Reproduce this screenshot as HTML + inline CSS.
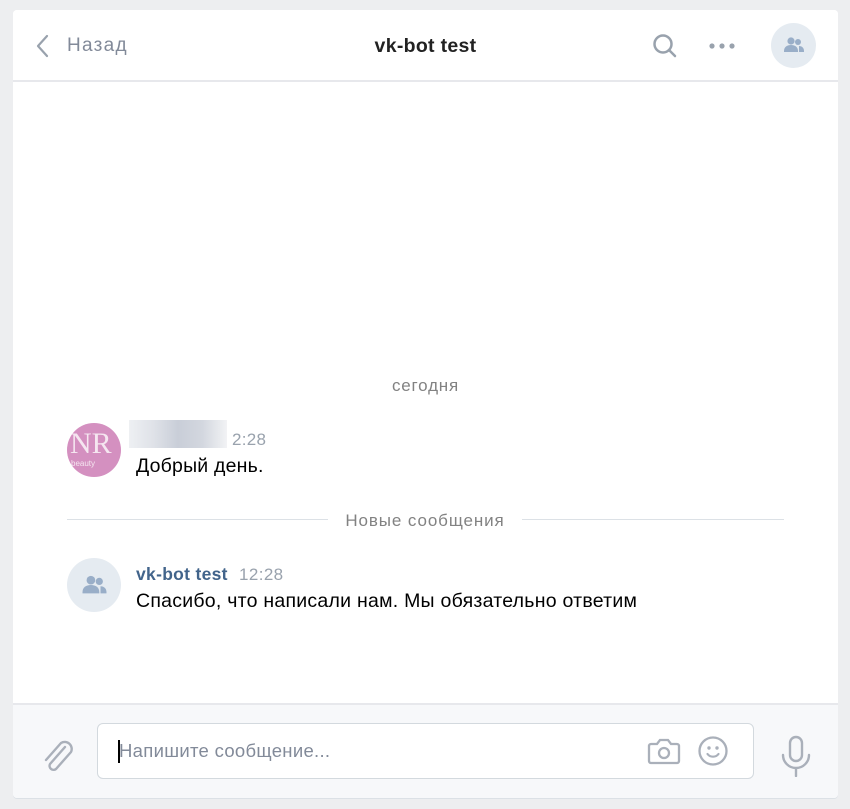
<!DOCTYPE html>
<html><head><meta charset="utf-8"><style>
*{margin:0;padding:0;box-sizing:border-box}
body{width:850px;height:809px;background:#edeef0;font-family:"Liberation Sans",Arial,sans-serif;position:relative;overflow:hidden}
.card{position:absolute;left:13px;top:10px;width:825px;height:788px;background:#fff;border-radius:4px;box-shadow:0 1px 0 #dce1e6;overflow:hidden}
.hdr{position:absolute;left:0;top:0;width:825px;height:72px;border-bottom:2px solid #e7e8ec;background:#fff}
.abs{position:absolute;white-space:nowrap}
.foot{position:absolute;left:0;top:693px;width:825px;height:95px;background:#f7f8fa;border-top:2px solid #e7e8ec}
.input{position:absolute;left:84px;top:18px;width:657px;height:56px;background:#fff;border:1px solid #d3d9de;border-radius:6px}
</style></head><body>
<div class="card">
 <div class="hdr">
  <svg class="abs" style="left:22px;top:24px" width="14" height="24" viewBox="0 0 14 24"><path d="M12 2L3 12l9 10" fill="none" stroke="#99a2ad" stroke-width="2.2" stroke-linecap="round" stroke-linejoin="round"/></svg>
  <div class="abs" style="left:54px;top:25px;font-size:19px;letter-spacing:1.3px;color:#828a99">Назад</div>
  <div class="abs" style="left:0;width:825px;top:25px;text-align:center;font-size:19.5px;letter-spacing:0.3px;font-weight:bold;color:#222">vk-bot test</div>
  <svg class="abs" style="left:639px;top:23px" width="26" height="26" viewBox="0 0 26 26"><circle cx="11" cy="11" r="8.5" fill="none" stroke="#99a2ad" stroke-width="2.5"/><path d="M17 17l6 6" stroke="#99a2ad" stroke-width="2.5" stroke-linecap="round"/></svg>
  <svg class="abs" style="left:695px;top:32px" width="30" height="8"><circle cx="4" cy="4" r="2.6" fill="#99a2ad"/><circle cx="14" cy="4" r="2.6" fill="#99a2ad"/><circle cx="24" cy="4" r="2.6" fill="#99a2ad"/></svg>
  <div class="abs" style="left:758px;top:13px;width:45px;height:45px;border-radius:50%;background:#e5ebf1"></div>
  <svg class="abs" style="left:770px;top:25px" width="22" height="20" viewBox="0 0 22 20"><circle cx="8" cy="6" r="3.6" fill="#99aec8"/><circle cx="15" cy="7" r="3" fill="#99aec8"/><path d="M1 16c0-4 3-6 7-6s7 2 7 6v1H1z" fill="#99aec8"/><path d="M16 11c3 0 5 2 5 5v1h-5z" fill="#99aec8"/></svg>
 </div>
 <div class="abs" style="left:0;width:825px;top:366px;text-align:center;font-size:17px;letter-spacing:0.8px;color:#828282">сегодня</div>
 <div class="abs" style="left:54px;top:413px;width:54px;height:54px;border-radius:50%;background:#d490c0;overflow:hidden"><div style="position:absolute;left:3px;top:4px;font-family:'Liberation Serif',serif;font-size:30px;color:#f5e6f0">NR</div><div style="position:absolute;left:4px;top:36px;font-size:8px;color:#f5e6f0">beauty</div></div>
 <div class="abs" style="left:116px;top:410px;width:98px;height:28px;background:linear-gradient(90deg,#eef0f3,#dfe2e8,#c9ced8,#d3d7df,#f2f3f5)"></div>
 <div class="abs" style="left:219px;top:420px;font-size:17px;letter-spacing:0.3px;color:#99a2ad">2:28</div>
 <div class="abs" style="left:123px;top:445px;font-size:19.5px;letter-spacing:0.2px;color:#000">Добрый день.</div>
 <div class="abs" style="left:54px;top:509px;width:261px;height:1px;background:#dce1e6"></div>
 <div class="abs" style="left:509px;top:509px;width:262px;height:1px;background:#dce1e6"></div>
 <div class="abs" style="left:315px;width:194px;top:501px;text-align:center;font-size:17px;letter-spacing:0.9px;color:#828282">Новые сообщения</div>
 <div class="abs" style="left:54px;top:548px;width:54px;height:54px;border-radius:50%;background:#e5ebf1"></div>
 <svg class="abs" style="left:68px;top:563px" width="27" height="24" viewBox="0 0 22 20"><circle cx="8" cy="6" r="3.6" fill="#99aec8"/><circle cx="15" cy="7" r="3" fill="#99aec8"/><path d="M1 16c0-4 3-6 7-6s7 2 7 6v1H1z" fill="#99aec8"/><path d="M16 11c3 0 5 2 5 5v1h-5z" fill="#99aec8"/></svg>
 <div class="abs" style="left:123px;top:554px;font-size:17.5px;letter-spacing:0.3px;font-weight:bold;color:#42648b">vk-bot test</div>
 <div class="abs" style="left:226px;top:555px;font-size:17px;letter-spacing:0.4px;color:#99a2ad">12:28</div>
 <div class="abs" style="left:123px;top:580px;font-size:19.5px;letter-spacing:0.25px;color:#000">Спасибо, что написали нам. Мы обязательно ответим</div>
 <div class="foot">
  <svg class="abs" style="left:26px;top:32px" width="36" height="40" viewBox="0 0 36 40"><path d="M26 10L11 27a4 4 0 0 0 6 5l15-17a7 7 0 0 0-10-9L7 23" fill="none" stroke="#aab0ba" stroke-width="2.4" stroke-linecap="round"/></svg>
  <div class="input">
   <div class="abs" style="left:20px;top:16px;width:2px;height:23px;background:#000"></div>
   <div class="abs" style="left:21px;top:16px;font-size:18.5px;letter-spacing:0.3px;color:#828a99">Напишите сообщение...</div>
   <svg class="abs" style="left:549px;top:12px" width="34" height="30" viewBox="0 0 34 30"><path d="M4 8h6l3-4h8l3 4h6a2 2 0 0 1 2 2v15a2 2 0 0 1-2 2H4a2 2 0 0 1-2-2V10a2 2 0 0 1 2-2z" fill="none" stroke="#aab0ba" stroke-width="2.3"/><circle cx="17" cy="17" r="5" fill="none" stroke="#aab0ba" stroke-width="2.3"/></svg>
   <svg class="abs" style="left:599px;top:11px" width="32" height="32" viewBox="0 0 32 32"><circle cx="16" cy="16" r="13.5" fill="none" stroke="#aab0ba" stroke-width="2.3"/><circle cx="12" cy="13" r="1.7" fill="#aab0ba"/><circle cx="20" cy="13" r="1.7" fill="#aab0ba"/><path d="M10.5 19a7 7 0 0 0 11 0" fill="none" stroke="#aab0ba" stroke-width="2.2" stroke-linecap="round"/></svg>
  </div>
  <svg class="abs" style="left:766px;top:30px" width="34" height="42" viewBox="0 0 34 42"><rect x="11" y="2" width="12" height="24" rx="6" fill="none" stroke="#aab0ba" stroke-width="2.4"/><path d="M4 20a13 13 0 0 0 26 0M17 33v8" fill="none" stroke="#aab0ba" stroke-width="2.4" stroke-linecap="round"/></svg>
 </div>
</div>
</body></html>
